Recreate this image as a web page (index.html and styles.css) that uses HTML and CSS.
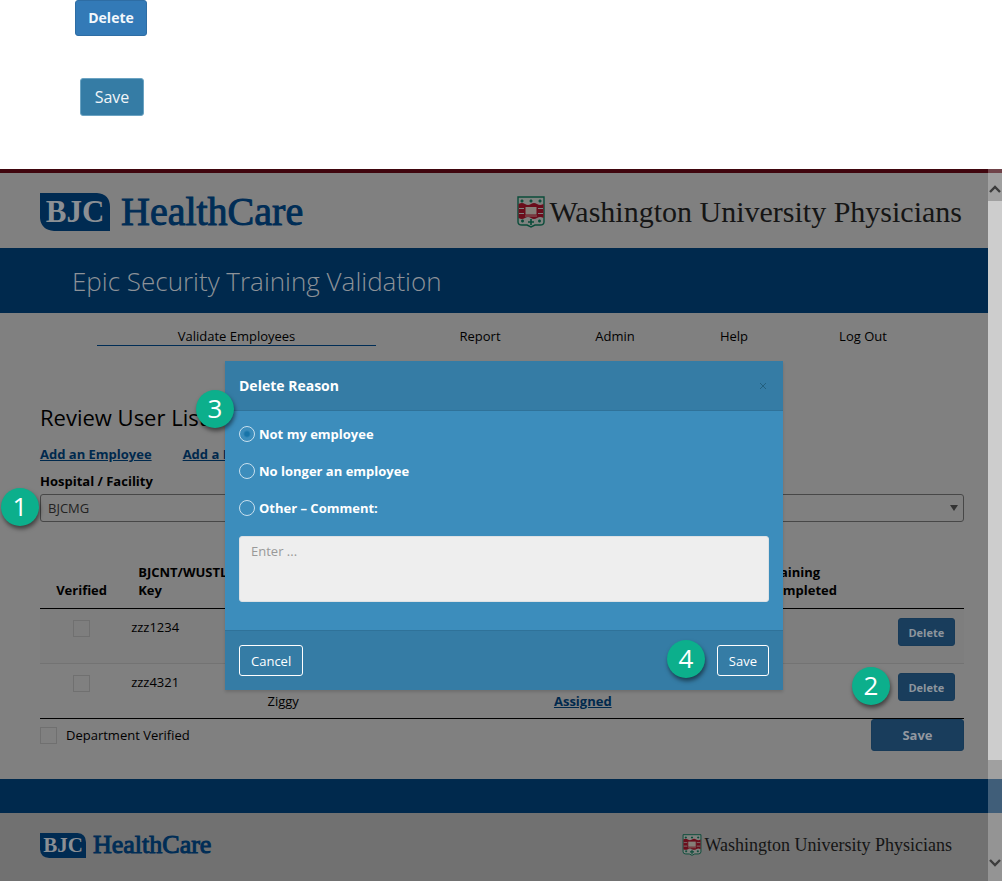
FILE: index.html
```html
<!DOCTYPE html>
<html lang="en">
<head>
<meta charset="utf-8">
<meta name="viewport" content="width=device-width, initial-scale=1">
<title>Epic Security Training Validation</title>
<link rel="stylesheet" href="styles.css">
</head>
<body>
<svg class="defs" aria-hidden="true">
  <symbol id="badge" viewBox="0 0 70 38">
    <path d="M0 0H57Q70 1 70 14V38H14Q1 37 0 25Z" fill="#002b52"/>
  </symbol>
  <symbol id="shield" viewBox="0 0 28 32">
    <path d="M1 1H27V26Q27 29 23 29H18L14 31L10 29H5Q1 29 1 26Z" fill="#7f827f" stroke="#0b4c3a" stroke-width="1.4"/>
    <path d="M1.500 8Q5 6 8 8T14 8T20 8T26.500 8V12H1.500ZM1.500 18H26.500V22Q23 20 20 22T14 22T8 22T1.500 22Z" fill="#6b0d1b"/>
    <path d="M1.500 12H8V18H1.500ZM20 12H26.500V18H20Z" fill="#6b0d1b"/>
    <path d="M2 12.500H7M21 12.500H26M2 17.500H7M21 17.500H26" stroke="#808080" stroke-width="1"/>
    <path d="M8 10.500H20V19H8Z" fill="#857f78" stroke="#6b0d1b"/>
    <path d="M8 20H20" stroke="#958f86" stroke-width=".7"/>
    <path d="M3.500 5H6.500M5 3.500V6.500M12.500 5H15.500M14 3.500V6.500M21.500 5H24.500M23 3.500V6.500M4 25H7M5.500 23.500V26.500M11 26H17M14 23V29M21 25H24M22.500 23.500V26.500" stroke="#0b4c3a" stroke-width="1.600"/>
  </symbol>
</svg>

<section class="samples">
  <button class="sample-delete" type="button">Delete</button>
  <button class="sample-save" type="button">Save</button>
</section>

<div class="app">
  <header class="brand">
    <div class="bjc"><span class="bjc-mark"><svg><use href="#badge"/></svg><b>BJC</b></span><span class="bjc-name">HealthCare</span></div>
    <div class="wup"><svg><use href="#shield"/></svg><span>Washington University Physicians</span></div>
  </header>
  <h1 class="title">Epic Security Training Validation</h1>
  <nav class="nav">
    <a class="current" href="#">Validate Employees</a>
    <a href="#">Report</a>
    <a href="#">Admin</a>
    <a href="#">Help</a>
    <a href="#">Log Out</a>
  </nav>

  <main class="main">
    <h2>Review User List</h2>
    <div class="links"><a href="#">Add an Employee</a><a href="#">Add a Department</a></div>
    <label class="field-label" for="facility">Hospital / Facility</label>
    <div class="select">
      <select id="facility"><option>BJCMG</option></select>
      <svg viewBox="0 0 8 6"><path d="M0 0H8L4 6Z" fill="#333"/></svg>
    </div>

    <table class="users">
      <colgroup><col class="c-check"><col class="c-key"><col class="c-name"><col class="c-status"><col class="c-done"><col class="c-action"></colgroup>
      <thead>
        <tr><th class="check">Verified</th><th>BJCNT/WUSTL Key</th><th></th><th></th><th>Training Completed</th><th></th></tr>
      </thead>
      <tbody>
        <tr><td class="check"><input type="checkbox" aria-label="Verified zzz1234"></td><td class="key">zzz1234</td><td></td><td></td><td></td><td class="action"><button class="row-delete" type="button">Delete</button></td></tr>
        <tr><td class="check"><input type="checkbox" aria-label="Verified zzz4321"></td><td class="key">zzz4321</td><td><br>Ziggy</td><td><br><a href="#">Assigned</a></td><td></td><td class="action"><button class="row-delete" type="button">Delete</button></td></tr>
      </tbody>
    </table>
    <div class="actions">
      <label><input type="checkbox">Department Verified</label>
      <button class="page-save" type="button">Save</button>
    </div>
  </main>

  <div class="band"></div>
  <footer class="brand brand-small">
    <div class="bjc"><span class="bjc-mark"><svg><use href="#badge"/></svg><b>BJC</b></span><span class="bjc-name">HealthCare</span></div>
    <div class="wup"><svg><use href="#shield"/></svg><span>Washington University Physicians</span></div>
  </footer>

  <div class="scrollbar">
    <svg viewBox="0 0 12 8"><path d="M1 7L6 2L11 7" fill="none" stroke="#3c3c3c" stroke-width="2.400"/></svg>
    <div class="thumb"></div>
    <svg viewBox="0 0 12 8"><path d="M1 1L6 6L11 1" fill="none" stroke="#3c3c3c" stroke-width="2.400"/></svg>
  </div>

  <form class="modal" role="dialog" aria-labelledby="reason-title">
    <div class="modal-head">
      <h3 id="reason-title">Delete Reason</h3>
      <button class="close" type="button" aria-label="Close"><svg viewBox="0 0 8 8"><path d="M1 1L7 7M7 1L1 7" stroke="#23607f" stroke-width="1"/></svg></button>
    </div>
    <div class="modal-body">
      <label><input type="radio" name="reason" checked>Not my employee</label>
      <label><input type="radio" name="reason">No longer an employee</label>
      <label><input type="radio" name="reason">Other – Comment:</label>
      <textarea placeholder="Enter ..." aria-label="Comment"></textarea>
    </div>
    <div class="modal-foot">
      <button type="button">Cancel</button>
      <button type="button">Save</button>
    </div>
  </form>

  <span class="step step-1">1</span>
  <span class="step step-2">2</span>
  <span class="step step-3">3</span>
  <span class="step step-4">4</span>
</div>
</body>
</html>
```

FILE: styles.css
```css
* { box-sizing: border-box; }
body {
  margin: 0;
  background: #fff;
  color: #000;
  font: 13px/18px "Open Sans", "Noto Sans", sans-serif;
}
button, select, textarea { font: inherit; }
button { padding: 0; border-radius: 3px; }
h1, h2, h3 { margin: 0; font-weight: 400; }
.defs { position: absolute; width: 0; height: 0; }

.samples {
  display: flex;
  flex-direction: column;
  align-items: flex-start;
  gap: 42px;
  height: 169px;
  padding-left: 75px;
}
.sample-delete {
  width: 72px;
  height: 36px;
  border: 1px solid #2e6da4;
  background: #337ab7;
  color: #f4f8fc;
  font-size: 14px;
  font-weight: 700;
}
.sample-save {
  width: 64px;
  height: 38px;
  margin-left: 5px;
  border: 1px solid #6ba3c2;
  background: #357ca5;
  color: #f0f5f8;
  font-size: 16px;
}

.app {
  position: relative;
  margin-right: 1px;
  border-top: 4px solid #40060e;
  background: #808080;
}
.brand {
  display: flex;
  align-items: center;
  justify-content: space-between;
  height: 75px;
  padding: 2px 40px 0;
}
.bjc, .wup { display: flex; align-items: center; }
.bjc { gap: 11px; }
.bjc-mark { display: grid; width: 70px; height: 38px; color: #8b8f94; }
.bjc-mark svg { grid-area: 1 / 1; width: 100%; height: 100%; }
.bjc-mark b {
  z-index: 1;
  grid-area: 1 / 1;
  place-self: center;
  font: 700 31px/38px "Liberation Serif", serif;
}
.bjc-name { color: #002d56; font: 40px/40px "Liberation Serif", serif; -webkit-text-stroke: 1px #002d56; }
.wup { gap: 4px; color: #151515; font: 30px/40px "Liberation Serif", serif; }
.wup svg { width: 28px; height: 32px; }

.title {
  padding: 1px 72px 0;
  background: #00294d;
  color: #8d9298;
  font-size: 26px;
  font-weight: 300;
  line-height: 64px;
}
.nav {
  display: grid;
  grid-template-columns: 279fr 208fr 62fr 176fr 82fr;
  padding: 0 98px 0 97px;
}
.nav a {
  padding-top: 14px;
  border-bottom: 1px solid transparent;
  color: #000;
  text-align: center;
  text-decoration: none;
  white-space: nowrap;
}
.nav .current { border-color: #002d56; }

.main { padding: 56px 38px 28px 40px; }
.main h2 { font-size: 22px; line-height: 30px; }
.links { display: flex; gap: 31px; padding-top: 13px; }
a { color: #00294d; }
.links a, .users a { font-weight: 700; }
.field-label { display: block; padding-top: 9px; font-weight: 700; }
.select { display: grid; align-items: center; padding-top: 4px; }
.select select {
  grid-area: 1 / 1;
  width: 100%;
  height: 28px;
  padding: 0 7px;
  border: 1px solid #474747;
  border-radius: 3px;
  appearance: none;
  background: transparent;
  color: #222;
}
.select svg { grid-area: 1 / 1; justify-self: end; width: 8px; height: 6px; margin-right: 6px; }

.users {
  width: 100%;
  margin-top: 38px;
  border-collapse: collapse;
  border-bottom: 1px solid #000;
  table-layout: fixed;
}
.c-check { width: 9%; }
.c-key { width: 14%; }
.c-name { width: 31%; }
.c-status { width: 23%; }
.c-done { width: 14%; }
.c-action { width: 9%; }
.users th { padding: 3px 0 9px 15px; border-bottom: 1px solid #000; text-align: left; vertical-align: bottom; }
.users td { height: 55px; padding: 9px 0 0 15px; border-top: 1px solid #737373; line-height: 19px; vertical-align: top; }
.users .key { padding-left: 8px; }
.users .action { padding-left: 17px; }
.users .check { padding-right: 0; padding-left: 0; text-align: center; }
.users tbody tr:first-child { background: #7e7e7e; }
.users tbody tr:first-child td { border-top-color: #000; }
input[type="checkbox"] {
  width: 17px;
  height: 17px;
  margin: 2px 0 0;
  border: 1px solid #707070;
  appearance: none;
}
.row-delete {
  display: block;
  width: 57px;
  height: 28px;
  border: 1px solid #173a58;
  background: #193d5c;
  color: #8d959d;
  font-size: 11px;
  font-weight: 700;
}
.actions { display: flex; align-items: flex-start; justify-content: space-between; }
.actions label { display: flex; gap: 9px; align-items: center; padding-top: 6px; }
.page-save {
  width: 93px;
  height: 32px;
  border: 1px solid #173a58;
  background: #193d5c;
  color: #9298a0;
  font-weight: 700;
}

.band { height: 34px; background: #00294d; }
.brand-small { height: 69px; padding: 0 50px 5px 40px; background: #717171; }
.brand-small .bjc { gap: 7px; }
.brand-small .bjc-mark { width: 46px; height: 25px; }
.brand-small .bjc-mark b { font-size: 21px; line-height: 25px; }
.brand-small .bjc-name { font-size: 26px; }
.brand-small .wup { gap: 2px; font-size: 18px; }
.brand-small .wup svg { width: 20px; height: 22px; }

.scrollbar {
  position: absolute;
  inset: -4px 0 0 auto;
  display: flex;
  flex-direction: column;
  align-items: center;
  width: 14px;
  padding: 16px 0 15px;
  background: rgba(255, 255, 255, .25);
}
.scrollbar svg { width: 12px; height: 8px; }
.thumb { flex: 1; width: 100%; margin: 8px 0 99px; background: #cdcdcd; }

.modal {
  position: absolute;
  top: 188px;
  left: 225px;
  width: 558px;
  background: #3c8dbc;
  box-shadow: 0 2px 3px rgba(0, 0, 0, .15);
  color: #fff;
}
.modal-head, .modal-foot {
  display: flex;
  align-items: center;
  justify-content: space-between;
  padding: 0 14px;
  background: #357ca5;
}
.modal-head { height: 50px; border-bottom: 1px solid #2f7299; }
.modal-head h3 { font-size: 14px; font-weight: 700; }
.close { width: 10px; height: 14px; border: 0; background: transparent; }
.close svg { display: block; width: 8px; height: 8px; }
.modal-body { padding: 14px 14px 28px; }
.modal-body label { display: flex; gap: 4px; align-items: center; height: 18px; margin-bottom: 19px; font-weight: 700; }
input[type="radio"] {
  width: 16px;
  height: 16px;
  margin: 0;
  border: 1px solid #c9e0ee;
  border-radius: 50%;
  appearance: none;
}
input[type="radio"]:checked { background: radial-gradient(circle, #1874a8 0 2px, transparent 4px); }
.modal-body textarea {
  display: block;
  width: 100%;
  height: 66px;
  padding: 5px 11px;
  border: 1px solid #dde1e4;
  border-radius: 3px;
  background: #eee;
  resize: none;
}
textarea::placeholder { color: #999; }
.modal-foot { height: 60px; border-top: 1px solid #2f7299; }
.modal-foot button { height: 31px; padding: 0 11px; border: 1px solid #fff; background: transparent; color: #fff; }

.step {
  position: absolute;
  width: 38px;
  height: 38px;
  border-radius: 50%;
  background: #0caf8c;
  box-shadow: 1px 3px 4px rgba(0, 0, 0, .5);
  color: #fff;
  font: 500 26px/37px "Open Sans", sans-serif;
  text-align: center;
}
.step-1 { top: 315px; left: 1px; }
.step-2 { top: 494px; left: 852px; }
.step-3 { top: 217px; left: 196px; }
.step-4 { top: 467px; left: 667px; }
```
